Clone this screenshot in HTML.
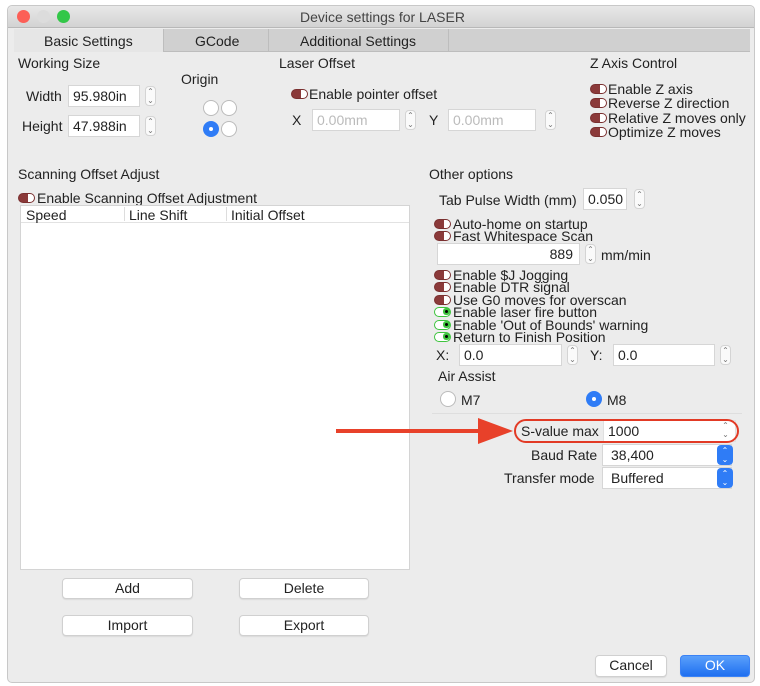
<!DOCTYPE html>
<html><head><meta charset="utf-8"><style>
*{margin:0;padding:0;box-sizing:border-box}
body{width:760px;height:686px;background:#fff;position:relative;overflow:hidden;font-family:"Liberation Sans",sans-serif;font-size:14px;color:#222}
.a{position:absolute;white-space:nowrap;line-height:16px}
.win{position:absolute;left:7px;top:5px;width:748px;height:678px;background:#ececec;border:1px solid #c8c8c8;border-radius:5px;overflow:hidden}
.in{position:absolute;background:#fff;border:1px solid #d6d6d6;height:22px;line-height:20px;padding-left:4px}
.dis{color:#bbb}
.sp{position:absolute;width:11px;height:20px;border:1px solid #d4d4d4;border-radius:4px;background:#fafafa;font-size:8px;line-height:9px;text-align:center;color:#777}
.tg{position:absolute;width:17px;height:10px;border-radius:5px;background:#8b3a3a;border:1px solid #7a3030}
.tg::after{content:"";position:absolute;right:0;top:0;width:6px;height:8px;border-radius:0 4px 4px 0;background:#fff}
.tgg{position:absolute;width:17px;height:10px;border-radius:5px;background:#fff;border:1.5px solid #3ec43e}
.tgg::after{content:"";position:absolute;right:0px;top:0px;width:7px;height:7px;border-radius:3px;background:#3ec43e}
.tgg::before{content:"";position:absolute;left:10px;top:2px;width:3px;height:3px;background:#000;border-radius:2px;z-index:1}
.btn{position:absolute;background:#fff;border:1px solid #d0d0d0;border-radius:4px;text-align:center;height:21px;line-height:19px;box-shadow:0 1px 1px rgba(0,0,0,.08)}
.rad{position:absolute;width:16px;height:16px;border-radius:50%;background:#fff;border:1px solid #bbb}
.radon{position:absolute;width:16px;height:16px;border-radius:50%;background:#2f7cf6}
.radon::after{content:"";position:absolute;left:6px;top:6px;width:4px;height:4px;border-radius:2px;background:#fff}
.blue{position:absolute;width:16px;height:20px;border-radius:4px;background:#2f7cf6;color:#fff;font-size:8px;line-height:9px;text-align:center;padding-top:1px}
</style></head><body>
<div class="win"></div>
<div style="position:absolute;left:8px;top:6px;width:746px;height:22px;background:linear-gradient(#e8e8e8,#d3d3d3);border-bottom:1px solid #b8b8b8;border-radius:5px 5px 0 0"></div>
<div style="position:absolute;left:17px;top:10px;width:13px;height:13px;border-radius:50%;background:#fc5f57"></div>
<div style="position:absolute;left:37px;top:10px;width:13px;height:13px;border-radius:50%;background:#dcdcdc"></div>
<div style="position:absolute;left:57px;top:10px;width:13px;height:13px;border-radius:50%;background:#33c748"></div>
<div class="a" style="left:300px;top:9px;color:#444">Device settings for LASER</div>
<div style="position:absolute;left:14px;top:29px;width:736px;height:23px;background:#d0d0d0;border-bottom:1px solid #bdbdbd"></div>
<div style="position:absolute;left:14px;top:29px;width:150px;height:23px;background:#e6e6e6;border-right:1px solid #bdbdbd"></div>
<div style="position:absolute;left:268px;top:29px;width:1px;height:23px;background:#bdbdbd"></div>
<div style="position:absolute;left:448px;top:29px;width:1px;height:23px;background:#bdbdbd"></div>
<div class="a" style="left:44px;top:33px">Basic Settings</div>
<div class="a" style="left:195px;top:33px">GCode</div>
<div class="a" style="left:300px;top:33px">Additional Settings</div>
<div class="a" style="left:18px;top:55px">Working Size</div>
<div class="a" style="left:26px;top:88px">Width</div>
<div class="in" style="left:68px;top:85px;width:72px">95.980in</div>
<div class="sp" style="left:145px;top:86px">⌃<br>⌄</div>
<div class="a" style="left:22px;top:118px">Height</div>
<div class="in" style="left:68px;top:115px;width:72px">47.988in</div>
<div class="sp" style="left:145px;top:116px">⌃<br>⌄</div>
<div class="a" style="left:181px;top:71px">Origin</div>
<div class="rad" style="left:203px;top:100px"></div>
<div class="rad" style="left:221px;top:100px"></div>
<div class="radon" style="left:203px;top:121px"></div>
<div class="rad" style="left:221px;top:121px"></div>
<div class="a" style="left:279px;top:55px">Laser Offset</div>
<div class="tg" style="left:291px;top:89px"></div>
<div class="a" style="left:309px;top:86px">Enable pointer offset</div>
<div class="a" style="left:292px;top:112px">X</div>
<div class="in dis" style="left:312px;top:109px;width:88px">0.00mm</div>
<div class="sp" style="left:405px;top:110px">⌃<br>⌄</div>
<div class="a" style="left:429px;top:112px">Y</div>
<div class="in dis" style="left:448px;top:109px;width:88px">0.00mm</div>
<div class="sp" style="left:545px;top:110px">⌃<br>⌄</div>
<div class="a" style="left:590px;top:55px">Z Axis Control</div>
<div class="tg" style="left:590px;top:84px"></div><div class="a" style="left:608px;top:81px">Enable Z axis</div>
<div class="tg" style="left:590px;top:98px"></div><div class="a" style="left:608px;top:95px">Reverse Z direction</div>
<div class="tg" style="left:590px;top:113px"></div><div class="a" style="left:608px;top:110px">Relative Z moves only</div>
<div class="tg" style="left:590px;top:127px"></div><div class="a" style="left:608px;top:124px">Optimize Z moves</div>
<div class="a" style="left:18px;top:166px">Scanning Offset Adjust</div>
<div class="tg" style="left:18px;top:193px"></div>
<div class="a" style="left:37px;top:190px">Enable Scanning Offset Adjustment</div>
<div style="position:absolute;left:20px;top:205px;width:390px;height:365px;background:#fff;border:1px solid #d4d4d4"></div>
<div style="position:absolute;left:21px;top:206px;width:388px;height:17px;border-bottom:1px solid #e2e2e2"></div>
<div style="position:absolute;left:124px;top:207px;width:1px;height:14px;background:#ddd"></div>
<div style="position:absolute;left:226px;top:207px;width:1px;height:14px;background:#ddd"></div>
<div class="a" style="left:26px;top:207px">Speed</div>
<div class="a" style="left:129px;top:207px">Line Shift</div>
<div class="a" style="left:231px;top:207px">Initial Offset</div>
<div class="btn" style="left:62px;top:578px;width:131px">Add</div>
<div class="btn" style="left:239px;top:578px;width:130px">Delete</div>
<div class="btn" style="left:62px;top:615px;width:131px">Import</div>
<div class="btn" style="left:239px;top:615px;width:130px">Export</div>
<div class="a" style="left:429px;top:166px">Other options</div>
<div class="a" style="left:439px;top:192px">Tab Pulse Width (mm)</div>
<div class="in" style="left:583px;top:188px;width:44px">0.050</div>
<div class="sp" style="left:634px;top:189px">⌃<br>⌄</div>
<div class="tg" style="left:434px;top:219px"></div><div class="a" style="left:453px;top:216px">Auto-home on startup</div>
<div class="tg" style="left:434px;top:231px"></div><div class="a" style="left:453px;top:228px">Fast Whitespace Scan</div>
<div class="in" style="left:437px;top:243px;width:143px;text-align:right;padding-right:6px">889</div>
<div class="sp" style="left:585px;top:244px">⌃<br>⌄</div>
<div class="a" style="left:601px;top:247px">mm/min</div>
<div class="tg" style="left:434px;top:270px"></div><div class="a" style="left:453px;top:267px">Enable $J Jogging</div>
<div class="tg" style="left:434px;top:282px"></div><div class="a" style="left:453px;top:279px">Enable DTR signal</div>
<div class="tg" style="left:434px;top:295px"></div><div class="a" style="left:453px;top:292px">Use G0 moves for overscan</div>
<div class="tgg" style="left:434px;top:307px"></div><div class="a" style="left:453px;top:304px">Enable laser fire button</div>
<div class="tgg" style="left:434px;top:320px"></div><div class="a" style="left:453px;top:317px">Enable 'Out of Bounds' warning</div>
<div class="tgg" style="left:434px;top:332px"></div><div class="a" style="left:453px;top:329px">Return to Finish Position</div>
<div class="a" style="left:436px;top:347px">X:</div>
<div class="in" style="left:459px;top:344px;width:103px">0.0</div>
<div class="sp" style="left:567px;top:345px">⌃<br>⌄</div>
<div class="a" style="left:590px;top:347px">Y:</div>
<div class="in" style="left:613px;top:344px;width:102px">0.0</div>
<div class="sp" style="left:720px;top:345px">⌃<br>⌄</div>
<div class="a" style="left:438px;top:368px">Air Assist</div>
<div class="rad" style="left:440px;top:391px"></div><div class="a" style="left:461px;top:392px">M7</div>
<div class="radon" style="left:586px;top:391px"></div><div class="a" style="left:607px;top:392px">M8</div>
<div style="position:absolute;left:432px;top:413px;width:310px;height:1px;background:#dedede"></div>
<div class="a" style="left:521px;top:423px">S-value max</div>
<div class="in" style="left:603px;top:420px;width:133px;border-color:#e0e0e0">1000</div>
<div class="sp" style="left:720px;top:421px;border:none;background:transparent">⌃<br>⌄</div>
<div style="position:absolute;left:514px;top:419px;width:225px;height:24px;border:2px solid #e23a25;border-radius:12px"></div>
<div class="a" style="left:531px;top:447px">Baud Rate</div>
<div class="in" style="left:602px;top:444px;width:130px;padding-left:8px">38,400</div>
<div class="blue" style="left:717px;top:445px">⌃<br>⌄</div>
<div class="a" style="left:504px;top:470px">Transfer mode</div>
<div class="in" style="left:602px;top:467px;width:130px;padding-left:8px">Buffered</div>
<div class="blue" style="left:717px;top:468px">⌃<br>⌄</div>
<div style="position:absolute;left:336px;top:429px;width:146px;height:4px;background:#e8412a"></div>
<svg style="position:absolute;left:478px;top:418px" width="36" height="26"><polygon points="0,0 35,13 0,26" fill="#e8412a"/></svg>
<div class="btn" style="left:595px;top:655px;width:72px;height:22px">Cancel</div>
<div class="btn" style="left:680px;top:655px;width:70px;height:22px;background:linear-gradient(#5aa0fb,#1f6ff0);color:#fff;border-color:#3b82f5">OK</div>
</body></html>
